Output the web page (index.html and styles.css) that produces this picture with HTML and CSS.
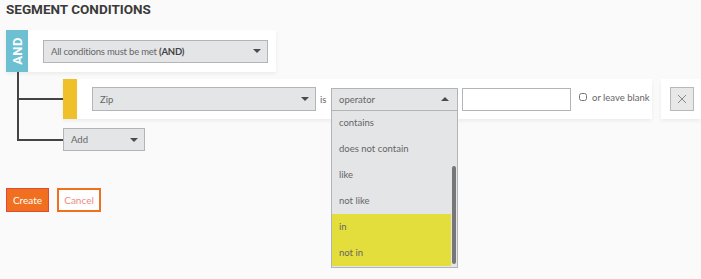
FILE: index.html
```html
<!DOCTYPE html>
<html lang="en">
<head>
    <meta charset="UTF-8">
    <title>Segment Conditions</title>
    <link rel="stylesheet" href="styles.css">
</head>
<body>
    <h2 class="title">SEGMENT CONDITIONS</h2>

    <div class="group-card">
        <div class="and-strip"><span>AND</span></div>
        <div class="select select-mode">
            <span>All conditions must be met <b>(AND)</b></span>
            <i class="caret"></i>
        </div>
    </div>

    <div class="tree">
        <div class="node">
            <div class="cond-row">
                <div class="cond-card">
                    <div class="cond-strip"></div>
                    <div class="select select-field">
                        <span>Zip</span>
                        <i class="caret"></i>
                    </div>
                    <span class="is">is</span>
                    <div class="op-wrap">
                        <div class="select select-op">
                            <span>operator</span>
                            <i class="caret up"></i>
                        </div>
                        <!-- open operator menu -->
                        <div class="op-menu">
                            <div class="op-item">contains</div>
                            <div class="op-item">does not contain</div>
                            <div class="op-item">like</div>
                            <div class="op-item">not like</div>
                            <div class="op-item hl">in</div>
                            <div class="op-item hl">not in</div>
                            <div class="scroll-thumb"></div>
                        </div>
                    </div>
                    <input class="value" type="text">
                    <label class="blank"><input type="checkbox"> or leave blank</label>
                </div>
                <div class="remove-card">
                    <button class="remove">
                        <svg viewBox="0 0 10 10" width="10" height="10">
                            <path d="M1 1 L9 9 M9 1 L1 9" stroke="#888" stroke-width="1" fill="none"/>
                        </svg>
                    </button>
                </div>
            </div>
        </div>
        <div class="node last">
            <div class="select select-add">
                <span>Add</span>
                <i class="caret"></i>
            </div>
        </div>
    </div>

    <div class="actions">
        <button class="btn-create">Create</button>
        <button class="btn-cancel">Cancel</button>
    </div>
</body>
</html>
```

FILE: styles.css
```css
html {
    background-color: #fafafa;
    overflow: hidden;
}
body {
    font-family: Lato, "Liberation Sans", sans-serif;
    background-color: #fafafa;
    margin: 0;
    padding: 0 0 0 6px;
    min-height: 279px;
    color: #666;
    font-size: 9.5px;
}
.title {
    font-family: Roboto, "Liberation Sans", sans-serif;
    font-size: 13.5px;
    font-weight: bold;
    color: #3a3a3a;
    margin: 0;
    padding-top: 1px;
    height: 29px;
    line-height: 16px;
}
.group-card {
    display: flex;
    align-items: center;
    width: 270px;
    height: 42px;
    background: white;
    box-shadow: 0 2px 4px rgba(0, 0, 0, 0.06);
}
.and-strip {
    width: 22px;
    height: 100%;
    background: #6cc0d2;
    display: flex;
    align-items: center;
    justify-content: center;
}
.and-strip span {
    writing-mode: vertical-rl;
    transform: rotate(180deg);
    color: white;
    font-family: Roboto, "Liberation Sans", sans-serif;
    font-weight: bold;
    font-size: 13px;
    letter-spacing: 0.5px;
}
.select {
    display: flex;
    align-items: center;
    justify-content: space-between;
    flex-shrink: 0;
    box-sizing: border-box;
    background: #e4e5e7;
    border: 1px solid #b3b4b7;
    padding: 0 6px 0 7px;
    color: #666;
}
.select b {
    color: #444;
}
.select-mode span {
    letter-spacing: -0.2px;
}
.caret {
    width: 0;
    height: 0;
    border-left: 4px solid transparent;
    border-right: 4px solid transparent;
    border-top: 4px solid #4a4a50;
}
.caret.up {
    border-top: none;
    border-bottom: 4px solid #4a4a50;
    margin-right: 2px;
}
.select-mode {
    width: 225px;
    height: 23px;
    margin-left: 15px;
}
.tree {
    margin-left: 11px;
}
.node {
    position: relative;
    padding-left: 46px;
}
.node::before {
    content: "";
    position: absolute;
    left: 0;
    top: 0;
    bottom: 0;
    border-left: 2px solid #444;
}
.node::after {
    content: "";
    position: absolute;
    left: 0;
    width: 46px;
    top: calc(50% + 2px);
    border-top: 2px solid #444;
}
.node:first-child {
    padding-top: 7px;
}
.node.last {
    padding-top: 9px;
}
.node.last::after {
    top: auto;
    bottom: 10px;
}
.node.last::before {
    bottom: 10px;
}
.cond-row {
    display: flex;
    align-items: center;
}
.cond-row > * {
    flex-shrink: 0;
}
.cond-card {
    display: flex;
    align-items: center;
    width: 589px;
    height: 40px;
    background: white;
    box-shadow: 0 2px 4px rgba(0, 0, 0, 0.06);
}
.cond-card > * {
    flex-shrink: 0;
}
.cond-strip {
    width: 14px;
    height: 100%;
    background: #f0c02a;
}
.select-field {
    width: 224px;
    height: 24px;
    margin-left: 15px;
}
.is {
    width: 7px;
    margin: 0 4px 0 4px;
}
.op-wrap {
    position: relative;
}
.select-op {
    width: 127px;
    height: 23px;
}
.op-menu {
    position: absolute;
    top: 22px;
    left: 0;
    width: 127px;
    height: 158px;
    box-sizing: border-box;
    background: #e4e5e7;
    border: 1px solid #b3b4b7;
    padding-right: 6px;
    overflow: hidden;
    z-index: 2;
}
.op-item {
    height: 26px;
    line-height: 26px;
    padding-left: 7px;
}
.op-item:first-child {
    height: 25px;
    line-height: 24px;
}
.op-item.hl {
    background: #e4de3c;
}
.scroll-thumb {
    position: absolute;
    right: 1px;
    top: 55px;
    width: 4px;
    height: 98px;
    border-radius: 2px;
    background: #777;
}
.value {
    width: 109px;
    height: 23px;
    box-sizing: border-box;
    margin: 0 0 0 4px;
    border: 1px solid #b3b4b7;
    background: white;
}
.blank {
    display: flex;
    align-items: center;
    margin-left: 8px;
    margin-top: -4px;
}
.blank input {
    width: 8px;
    height: 8px;
    margin: 0 5px 0 0;
}
.remove-card {
    display: flex;
    align-items: center;
    height: 40px;
    width: 31px;
    margin-left: 9px;
    padding-left: 9px;
    background: white;
    box-shadow: 0 2px 4px rgba(0, 0, 0, 0.06);
}
.remove {
    display: flex;
    align-items: center;
    justify-content: center;
    width: 24px;
    height: 24px;
    padding: 0;
    border: 1px solid #b8b8b8;
    background: #e8e8e8;
}
.select-add {
    width: 82px;
    height: 23px;
}
.actions {
    display: flex;
    gap: 8px;
    margin-top: 37px;
}
.actions button {
    height: 24px;
    box-sizing: border-box;
    padding: 0;
    font-family: Lato, "Liberation Sans", sans-serif;
    font-size: 10px;
}
.btn-create {
    width: 43px;
    background: #f07020;
    border: 1px solid #e0483a;
    color: white;
}
.btn-cancel {
    width: 44px;
    background: white;
    border: 2px solid #f07020;
    color: #f08a80;
}
```
